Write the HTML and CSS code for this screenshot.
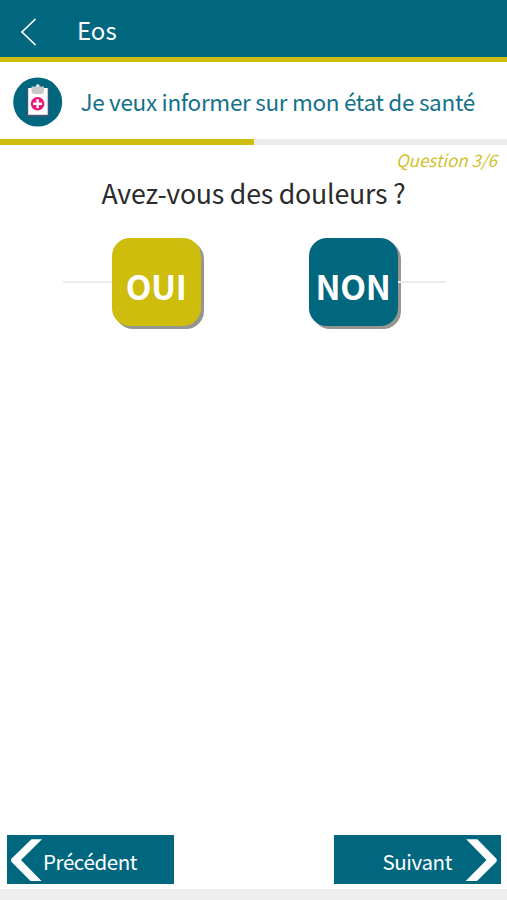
FILE: index.html
```html
<!DOCTYPE html>
<html lang="fr">
<head>
<meta charset="utf-8">
<title>Eos</title>
<link rel="stylesheet" href="styles.css">
</head>
<body>
<div class="app">
  <header class="topbar">
    <svg class="back" width="18" height="30" viewBox="0 0 18 30"><path d="M15.5 2L2 15L15.5 28" fill="none" stroke="#fff" stroke-width="1.7"/></svg>
    <span class="brand">Eos</span>
  </header>
  <section class="heading">
    <svg class="badge" width="50" height="50" viewBox="0 0 50 50">
      <circle cx="24.7" cy="25" r="24.5" fill="#00677f"/>
      <path d="M14 11H35.8V39.5H14z" fill="#4c5275"/>
      <path d="M15.2 11H34.7V37.8H15.2z" fill="#fff"/>
      <path d="M18.5 9.5H22.8Q22.8 7.3 24.8 7.3Q26.8 7.3 26.8 9.5H31V15.5L29 17H20.5L18.5 15.5z" fill="#c9c9cb"/>
      <circle cx="24.8" cy="8.6" r="1.2" fill="#fff"/>
      <circle cx="24.6" cy="26.8" r="6.8" fill="#e9157b"/>
      <path d="M24.6 22.3V31.3M20.1 26.8H29.1" stroke="#fff" stroke-width="2.4"/>
    </svg>
    <h1 class="title">Je veux informer sur mon état de santé</h1>
  </section>
  <div class="progress"><div class="progress-fill"></div></div>
  <main class="content">
    <p class="counter">Question 3/6</p>
    <h2 class="question">Avez-vous des douleurs ?</h2>
    <div class="answers">
      <span class="rule"></span>
      <button class="answer yes">OUI</button>
      <span class="gap"></span>
      <button class="answer no">NON</button>
      <span class="rule"></span>
    </div>
  </main>
  <nav class="pager">
    <button class="page prev">
      <svg width="32" height="44" viewBox="0 0 32 44"><path d="M20.5 1.2H31L10 22L30.5 43H19.5L0.6 24Q-0.6 22 0.6 20.5z" fill="#fff"/></svg>
      <span>Précédent</span>
    </button>
    <button class="page next">
      <span>Suivant</span>
      <svg width="32" height="44" viewBox="0 0 32 44"><path d="M12.3 1.2H1.2L21.5 22L0.7 43H12L31.2 24Q32.4 22 31.2 20.5z" fill="#fff"/></svg>
    </button>
  </nav>
  <div class="bottom"></div>
</div>
</body>
</html>
```
FILE: styles.css
```css
* { box-sizing: border-box; }
body {
  margin: 0;
  font-family: "Noto Sans CJK SC", "Noto Sans", sans-serif;
  background: #fff;
}
h1, h2, p { margin: 0; font-weight: 400; }
button { border: 0; padding: 0; font-family: inherit; color: #fff; }
.app { display: flex; flex-direction: column; height: 900px; overflow: hidden; }
.topbar {
  height: 62px;
  display: flex;
  align-items: center;
  padding-left: 20px;
  background: #00677f;
  border-bottom: 5px solid #cebd0d;
}
.back { margin-top: 7px; }
.brand { margin: 2px 0 0 39px; font-size: 24px; line-height: 36px; color: #fff; }
.heading { height: 77px; display: flex; align-items: center; padding: 3px 0 0 13px; }
.title {
  margin: -2px 0 0 17.5px;
  font-size: 22.5px;
  line-height: 34px;
  letter-spacing: -0.31px;
  color: #13718a;
  white-space: nowrap;
}
.progress { height: 6px; background: #ebebeb; }
.progress-fill { width: 254px; height: 6px; background: #cebd0d; }
.content { flex: 1; }
.counter {
  margin-top: 3px;
  padding-right: 10px;
  text-align: right;
  font-size: 17px;
  line-height: 24px;
  font-style: italic;
  color: #d3c12b;
}
.question {
  margin-top: 1px;
  text-align: center;
  font-size: 26.7px;
  line-height: 40px;
  letter-spacing: -0.22px;
  color: #2b2b2b;
}
.answers { display: flex; align-items: center; padding: 0 61px 0 63px; margin-top: 25px; }
.rule { flex: 1; height: 2px; background: #ececf0; }
.gap { width: 108px; }
.answer {
  width: 89px;
  height: 88px;
  border-radius: 18px;
  padding-top: 7px;
  font-size: 33.5px;
  line-height: 40px;
  letter-spacing: -0.4px;
  font-weight: 700;
  box-shadow: 3px 3px 0 #979592;
}
.yes { background: #cebd0d; }
.no { background: #00677f; }
.pager { display: flex; justify-content: space-between; padding: 0 6px 5px 7px; }
.page {
  width: 167px;
  height: 49px;
  display: flex;
  align-items: center;
  background: #00677f;
  font-size: 20.5px;
  line-height: 30px;
  letter-spacing: -0.4px;
}
.page span { margin-top: 2px; }
.prev { padding-left: 4px; }
.next { padding-right: 4px; justify-content: flex-end; }
.next svg { margin-left: 13px; }
.bottom { height: 11px; background: #eee; }
```
